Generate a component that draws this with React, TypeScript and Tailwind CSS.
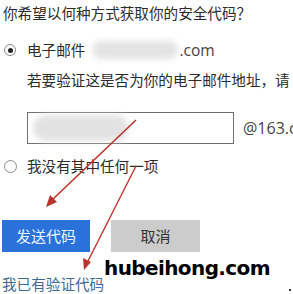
export default function App() {
  return (
    <div className="relative w-[293px] h-[294px] overflow-hidden bg-white text-[#2b2b2b] font-['Noto_Sans_CJK_SC','Noto_Sans',sans-serif] text-[14.6px]">
      <h1 className="pl-[3px] pt-[3px] leading-[20px] font-normal">你希望以何种方式获取你的安全代码？</h1>

      {/* email option */}
      <div className="mt-[17px] flex items-center h-[20px]">
        <span className="ml-[4px] w-[12px] h-[12px] rounded-full border border-[#8a8a8a] flex items-center justify-center">
          <span className="w-[5px] h-[5px] rounded-full bg-[#222]"></span>
        </span>
        <span className="ml-[11px] leading-[20px]">电子邮件</span>
        <span className="ml-[7px] w-[86px] h-[18px] rounded-full bg-[#e3e3e3] blur-[3px]"></span>
        <span className="ml-[1px] leading-[20px] text-[#444] font-['Open_Sans',sans-serif] text-[15.5px]">.com</span>
      </div>

      <p className="mt-[10px] pl-[27px] leading-[20px] whitespace-nowrap">若要验证这是否为你的电子邮件地址，请</p>

      <div className="mt-[22px] pl-[27px] flex items-center">
        <div className="shrink-0 w-[207px] h-[32px] border border-[#6f6f6f] flex items-center px-[5px]">
          <span className="w-[96px] h-[26px] rounded-full bg-[#e2e2e2] blur-[3px]"></span>
        </div>
        <span className="ml-[9px] text-[#444] font-['Open_Sans',sans-serif] text-[16px] whitespace-nowrap">@163.com</span>
      </div>

      {/* none option */}
      <div className="mt-[12px] flex items-center h-[20px]">
        <span className="ml-[4px] w-[13px] h-[13px] rounded-full border border-[#8a8a8a]"></span>
        <span className="ml-[10px] leading-[20px]">我没有其中任何一项</span>
      </div>

      <div className="mt-[44px] pl-[2px] flex gap-[21px]">
        <button className="w-[88px] h-[32px] bg-[#2a72d9] text-[#eaf2ff] text-[15px]">发送代码</button>
        <button className="w-[89px] h-[32px] bg-[#cccccc] text-[#333] text-[15px]">取消</button>
      </div>

      <a className="block mt-[22px] pl-[2px] leading-[20px] text-[#3d6b92]">我已有验证代码</a>

      {/* red arrows drawn over the screenshot */}
      <svg className="absolute inset-0 pointer-events-none" width="293" height="294" viewBox="0 0 293 294">
        <line x1="136" y1="120" x2="52" y2="200" stroke="#b8352d" strokeWidth="1.6" />
        <polygon points="46,207 50,195 57,202" fill="#b8352d" />
        <line x1="136" y1="166" x2="87" y2="263" stroke="#b8352d" strokeWidth="1.4" />
        <polygon points="84,270 83,258 91,262" fill="#b8352d" />
      </svg>

      {/* watermark */}
      <span className="absolute left-[104px] top-[254px] text-[20px] leading-[28px] font-bold tracking-[-0.6px] text-black font-['DejaVu_Sans',sans-serif]">
        hubeihong.com
      </span>
      <span className="absolute left-[289px] top-[289px] w-[2px] h-[2px] bg-[#333]"></span>
    </div>
  );
}
